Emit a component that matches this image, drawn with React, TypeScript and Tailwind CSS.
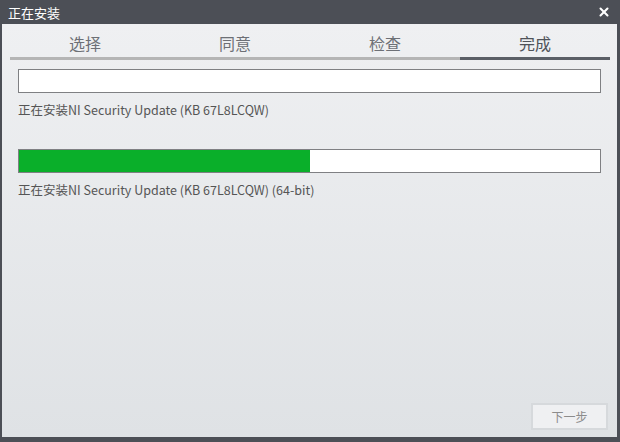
import { X } from "lucide-react";

const steps = ["选择", "同意", "检查", "完成"];

function ProgressBox({ value }: { value: number }) {
  return (
    <div className="h-[24px] border border-[#7f8083] bg-white">
      <div className="h-full bg-[#0aaf2a]" style={{ width: `${value}%` }} />
    </div>
  );
}

export default function App() {
  return (
    <div
      className="w-[620px] h-[442px] bg-[#4c4f56] flex flex-col"
      style={{ fontFamily: '"Noto Sans CJK SC", "Noto Sans", sans-serif' }}
    >
      {/* Title bar */}
      <div className="h-[24px] flex items-center justify-between pl-[8px] pr-[9px]">
        <span className="text-[13px] leading-none text-white">正在安装</span>
        <X className="w-[14px] h-[14px] text-white" strokeWidth={3.5} />
      </div>

      {/* Body */}
      <div className="flex-1 ml-[2px] mr-[3px] mb-[5px] bg-gradient-to-b from-[#eff0f2] to-[#dfe2e5] flex flex-col">
        {/* Steps */}
        <div className="pl-[8px] pr-[7px] pt-[7px] grid grid-cols-4">
          {steps.map((s, i) => (
            <div key={s} className="flex flex-col">
              <div
                className={`h-[26px] text-center text-[16px] leading-[24px] ${
                  i === 3 ? "text-[#4f5359]" : "text-[#6d7076]"
                }`}
              >
                {s}
              </div>
              <div className={`h-[3px] ${i === 3 ? "bg-[#5b5f66]" : "bg-[#b5b5b5]"}`} />
            </div>
          ))}
        </div>

        {/* Progress */}
        <div className="px-[16px] pt-[9px] flex flex-col">
          <ProgressBox value={0} />
          <div className="mt-[8px] text-[12.5px] leading-[18px] text-[#555]">
            正在安装NI Security Update (KB 67L8LCQW)
          </div>
          <div className="mt-[30px]">
            <ProgressBox value={50} />
          </div>
          <div className="mt-[8px] text-[12.5px] leading-[18px] text-[#555]">
            正在安装NI Security Update (KB 67L8LCQW) (64-bit)
          </div>
        </div>

        <div className="flex-1" />

        {/* Footer */}
        <div className="flex justify-end pr-[9px] pb-[7px]">
          <button className="w-[77px] h-[27px] border-2 border-[#d6d9dc] bg-[#eff0f2] text-[12px] text-[#8c8c8c]">
            下一步
          </button>
        </div>
      </div>
    </div>
  );
}
